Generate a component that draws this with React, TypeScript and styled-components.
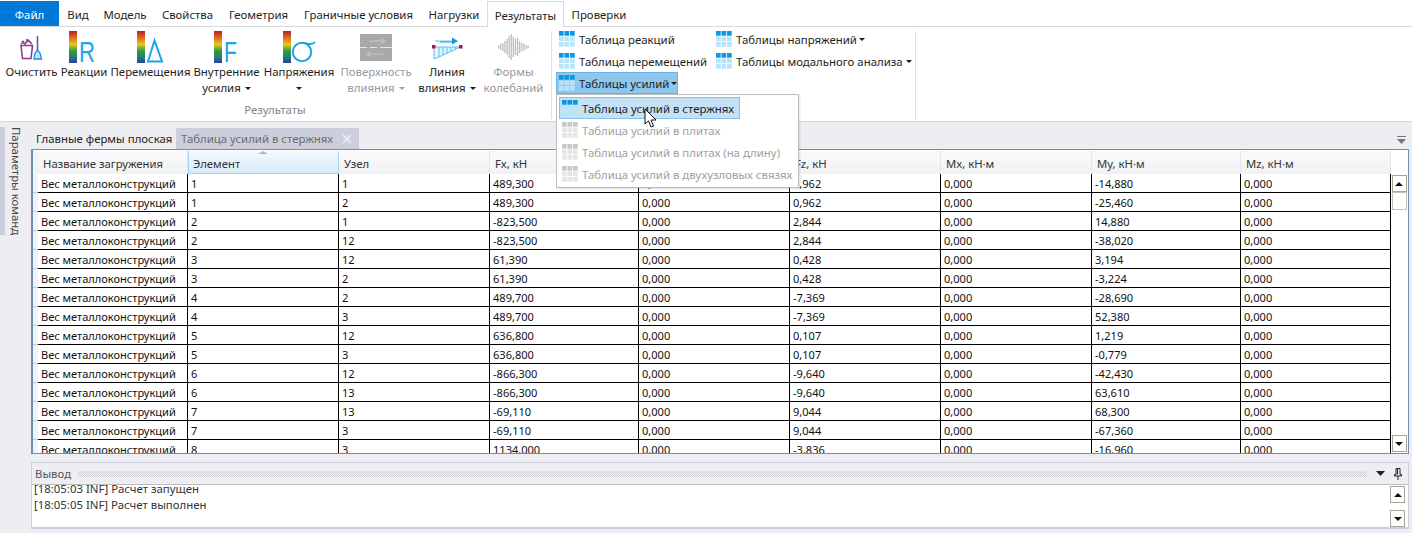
import React from "react";
import styled, { createGlobalStyle } from "styled-components";

const Global = createGlobalStyle`
  html, body { margin: 0; padding: 0; background: #eeeef2; }
  body { font-family: "Noto Sans", "Liberation Sans", sans-serif; font-size: 11.4px; color: #1e1e1e; }
  #root { width: 1412px; height: 533px; overflow: hidden; }
`;

const Page = styled.div`
  width: 1412px; height: 533px; display: flex; flex-direction: column; position: relative; overflow: hidden;
`;
const MenuBar = styled.div`
  height: 25px; padding-top: 1px; background: #fff; display: flex; border-bottom: 1px solid #dadada; box-sizing: content-box; flex: none;
`;
const FileTab = styled.div`
  width: 59px; height: 25px; background: #0078d7; color: #fff; display: flex; align-items: center; justify-content: center; margin-right: 1px; box-sizing: border-box; padding-top: 1px;
`;
const MenuTab = styled.div<{ $active?: boolean; $w: number }>`
  width: ${p => p.$w}px; height: ${p => (p.$active ? 26 : 25)}px; display: flex; align-items: center; justify-content: center; box-sizing: border-box;
  background: #fff; padding-top: ${p => (p.$active ? 1 : 2)}px; position: relative;
  ${p => p.$active ? "border: 1px solid #dadada; border-bottom: none;" : ""}
`;
const Ribbon = styled.div`
  height: 94px; flex: none; background: #fff; display: flex; border-bottom: 1px solid #d8d8dc; padding-left: 4px; box-sizing: content-box;
`;
const ResultsGroup = styled.div`
  display: flex; flex-direction: column; width: 547px; height: 94px; flex: none;
`;
const LargeRow = styled.div`
  display: flex; height: 75px; align-items: flex-start;
`;
const GroupLabel = styled.div`
  width: 542px; text-align: center; color: #858585; line-height: 16px;
`;
const LargeButton = styled.div<{ $w: number; $off?: boolean }>`
  width: ${p => p.$w}px; flex: none; display: flex; flex-direction: column; align-items: center; padding-top: 4px; white-space: nowrap;
  color: ${p => (p.$off ? "#9a9a9a" : "#1e1e1e")}; line-height: 16px;
`;
const IconBox = styled.div`
  height: 32px; margin-bottom: 1px; display: flex; align-items: center; justify-content: center;
`;
const Caret = styled.span<{ $off?: boolean; $shift?: number }>`
  display: inline-block; width: 0; height: 0; margin-left: ${p => p.$shift ?? 4}px; vertical-align: 2px;
  border-left: 3px solid transparent; border-right: 3px solid transparent; border-top: 3px solid ${p => (p.$off ? "#a0a0a0" : "#1e1e1e")};
`;
const Sep = styled.div`
  width: 1px; height: 88px; margin-top: 4px; background: #e0e0e4; flex: none;
`;
const TablesGroup = styled.div`
  display: flex; padding: 1px 0 0 4px; gap: 3px; width: 363px; box-sizing: border-box;
`;
const SmallCol = styled.div`
  display: flex; flex-direction: column;
`;
const SmallButton = styled.div<{ $active?: boolean }>`
  height: 22px; display: flex; align-items: center; gap: 4px; padding: 0 3px; white-space: nowrap; width: max-content; box-sizing: border-box;
  ${p => p.$active ? "background: #8ec6ee; border: 1px solid #6db2e4; padding: 0 0 0 2px;" : ""}
`;
const Main = styled.div`
  flex: 1; display: flex; min-height: 0;
`;
const SideRail = styled.div`
  width: 31px; flex: none; display: flex; padding-top: 5px; align-items: flex-start;
`;
const RailStripe = styled.div`
  width: 5px; height: 108px; background: #cccedb; flex: none;
`;
const RailText = styled.div`
  writing-mode: vertical-rl; color: #444; margin-left: 3px; line-height: 16px; white-space: nowrap;
`;
const Work = styled.div`
  width: 1378px; flex: none; display: flex; flex-direction: column;
`;
const DocTabs = styled.div`
  height: 21px; margin-top: 6px; display: flex; align-items: flex-start; position: relative; flex: none;
`;
const DocTab = styled.div`
  height: 20px; display: flex; align-items: center; padding: 0 5px; white-space: nowrap; width: 145px; box-sizing: border-box;
`;
const DimDocTab = styled.div`
  height: 21px; width: 183px; box-sizing: border-box; display: flex; align-items: center; justify-content: space-between; padding: 0 7px 0 5px; white-space: nowrap;
  background: #cccedb; color: #6d6d70;
`;
const OverflowIcon = styled.div`
  position: absolute; right: 3px; top: 4px; width: 9px;
`;
const TableFrame = styled.div`
  height: 305px; flex: none; border: 1px solid #6f8fb0; background: #fff; display: flex; overflow: hidden; padding: 1px 0 0 1px;
  box-sizing: border-box; box-shadow: inset 1px 0 0 #6f8fb0;
`;
const GridArea = styled.div`
  display: grid; width: 1358px; flex: none; grid-template-columns: 5px 150px 151px 151px 149px 151px 151px 151px 149px 150px; grid-auto-rows: 19px; align-content: start;
  grid-template-rows: 23px; font-size: 11.05px;
`;
const HeadCorner = styled.div`
  background: #f2f3f5;
`;
const HeadCell = styled.div<{ $sel?: boolean }>`
  height: 23px; box-sizing: border-box; display: flex; align-items: center; padding: 2px 0 0 5px; color: #333; white-space: nowrap; position: relative; font-size: 11.3px;
  background: ${p => (p.$sel ? "linear-gradient(#f2f9fe, #d8ecfa)" : "linear-gradient(#fafafb, #f0f1f3)")};
  border-right: 1px solid ${p => (p.$sel ? "#a6d4f2" : "#e6e6ea")};
  ${p => p.$sel ? "box-shadow: inset 1px 0 0 #a6d4f2; border-bottom: 1px solid #a6d4f2;" : ""}
`;
const SortMark = styled.div`
  position: absolute; left: 70px; top: 0; width: 0; height: 0;
  border-left: 5px solid transparent; border-right: 5px solid transparent; border-bottom: 3px solid #a8b8c4;
`;
const RowHead = styled.div`
  background: #f2f3f5; border-bottom: 1px solid #c8c8c8;
`;
const Cell = styled.div`
  height: 19px; box-sizing: border-box; border-right: 1px solid #000; border-bottom: 1px solid #000; padding-left: 3px;
  line-height: 19px; white-space: nowrap; color: #111; overflow: hidden;
`;
const VScroll = styled.div`
  flex: 1; display: flex; flex-direction: column; padding: 24px 1px 1px 0; background: #fff;
`;
const ScrollTrack = styled.div`
  flex: 1; display: flex; flex-direction: column; align-items: center;
`;
const ScrollBtn = styled.div`
  width: 15px; height: 17px; box-sizing: border-box; border: 1px solid #a9a498; background: #fff; display: flex; align-items: center; justify-content: center; flex: none;
`;
const ScrollThumb = styled.div`
  width: 15px; height: 18px; box-sizing: border-box; border: 1px solid #c4c0b6; background: #fff; flex: none;
`;
const Spacer = styled.div`
  flex: 1;
`;
const Tri = styled.span<{ $up?: boolean }>`
  width: 0; height: 0; border-left: 4px solid transparent; border-right: 4px solid transparent;
  ${p => (p.$up ? "border-bottom: 4px solid #111;" : "border-top: 4px solid #111;")}
`;
const Output = styled.div`
  margin-top: 8px; height: 67px; flex: none; box-sizing: border-box; border: 1px solid #cccedb; border-bottom-width: 2px; display: flex; flex-direction: column; background: #fff;
`;
const OutHead = styled.div`
  height: 21px; flex: none; background: #eeeef2; border-bottom: 1px solid #bdbdbd; display: flex; align-items: center; padding: 0 6px 0 3px; gap: 7px; color: #555;
`;
const Dots = styled.div`
  flex: 1; height: 6px; margin-right: 2px;
  background-image: conic-gradient(#d2d2d8 25%, transparent 0 50%, #d2d2d8 0 75%, transparent 0); background-size: 2px 2px;
`;
const OutBody = styled.div`
  flex: 1; display: flex; min-height: 0; overflow: hidden;
`;
const LogText = styled.div`
  flex: 1; padding: 0 0 0 2px; line-height: 16px; color: #333; margin-top: -4px; white-space: pre;
`;
const LogScroll = styled.div`
  width: 17px; flex: none; margin-right: 1px; display: flex; flex-direction: column; padding: 1px 0 0;
`;
const Dropdown = styled.div`
  position: absolute; left: 556px; top: 94px; width: 243px; height: 94px; box-sizing: border-box; background: #fff; border: 1px solid #bdbdbd;
  padding: 2px; display: flex; flex-direction: column; box-shadow: 1px 1px 2px rgba(0,0,0,.12); z-index: 5;
`;
const DropItem = styled.div<{ $hot?: boolean; $off?: boolean }>`
  height: 22px; flex: none; width: ${p => (p.$hot ? "181px" : "auto")}; box-sizing: border-box; display: flex; align-items: center; gap: 4px; padding-left: 3px; white-space: nowrap;
  color: ${p => (p.$off ? "#a0a0a0" : "#1e1e1e")};
  ${p => p.$hot ? "background: #c5e1f6; border: 1px solid #88c2ec; padding-left: 2px;" : ""}
`;
const Cursor = styled.svg`
  position: absolute; left: 644px; top: 108px; z-index: 6;
`;

const TableIcon = ({ off }: { off?: boolean }) => {
  const top = off ? "#c8c8c8" : "#0a97e6";
  const rest = off ? "#e6e6e6" : "#b8e4fa";
  const cells = [];
  for (let r = 0; r < 3; r++)
    for (let c = 0; c < 3; c++)
      cells.push(<rect key={`${r}${c}`} x={c * 5.5} y={r * 5.5} width={4.7} height={4.7} fill={r === 0 ? top : rest} />);
  return <svg width="16" height="16" viewBox="0 0 16 16" style={{ flex: "none" }}>{cells}</svg>;
};

const Spectrum = ({ id }: { id: string }) => (
  <>
    <defs>
      <linearGradient id={id} x1="0" y1="0" x2="0" y2="1">
        <stop offset="0" stopColor="#b3202a" />
        <stop offset=".25" stopColor="#e67a1e" />
        <stop offset=".42" stopColor="#e6c81e" />
        <stop offset=".62" stopColor="#2f9e3a" />
        <stop offset=".82" stopColor="#1f7f7a" />
        <stop offset="1" stopColor="#2b3f8f" />
      </linearGradient>
    </defs>
    <rect x="0" y="0" width="8" height="32" fill={`url(#${id})`} />
  </>
);

const LetterSvg = styled.svg<{ $nudge: number }>`
  margin-left: ${p => p.$nudge}px;
`;
const LetterIcon = ({ id, letter, w, nudge }: { id: string; letter: string; w: number; nudge: number }) => (
  <LetterSvg $nudge={nudge} width="30" height="32" viewBox="0 0 30 32">
    <Spectrum id={id} />
    <text x="10" y="31" fontFamily="Liberation Sans, sans-serif" fontSize="29" fill="#1ea4e8" textLength={w} lengthAdjust="spacingAndGlyphs">{letter}</text>
  </LetterSvg>
);
const DeltaIcon = () => (
  <svg width="27" height="32" viewBox="0 0 27 32">
    <Spectrum id="gd" />
    <path d="M17.5 9.5 L11 30.5 H25 Z" fill="none" stroke="#1ea4e8" strokeWidth="2" />
  </svg>
);
const SigmaIcon = () => (
  <svg width="33" height="32" viewBox="0 0 33 32">
    <Spectrum id="gs" />
    <circle cx="19" cy="21" r="9.2" fill="none" stroke="#1ea4e8" strokeWidth="2" />
    <path d="M20 11.8 C24 12.5 29 15 32 11" fill="none" stroke="#1ea4e8" strokeWidth="2" />
  </svg>
);
const BroomIcon = () => (
  <svg width="24" height="32" viewBox="0 0 24 32" style={{ marginLeft: 1 }}>
    <path d="M1 14.5 H12.5 L11 27.5 H2.5 Z" fill="none" stroke="#8e3b8c" strokeWidth="1.6" />
    <path d="M2 10 L5 13 L8 9 L12 13 M6 8.5 L9.5 11 M1 13 L4 10" fill="none" stroke="#8e3b8c" strokeWidth="1.5" />
    <path d="M17.5 5 V19" stroke="#6a55a8" strokeWidth="1.6" />
    <path d="M14 28 L15 22 L17.5 19 L20 22 L21.5 28 Z" fill="#bfe4fa" stroke="#1f8fdc" strokeWidth="1.3" />
  </svg>
);
const SurfaceIcon = () => (
  <svg width="32" height="28" viewBox="0 0 32 28" style={{ marginTop: 2 }}>
    <rect width="32" height="27" fill="#a9a9a9" />
    <path d="M0 13.5 H7 M10 13.5 H17 M20 13.5 H32" stroke="#e8e8e8" strokeWidth="1.2" />
    <path d="M9 7 H25 M21 4.5 L25 7 L21 9.5 M23 20 H7 M11 17.5 L7 20 L11 22.5" fill="none" stroke="#c9c9c9" strokeWidth="1" />
  </svg>
);
const LineIcon = () => (
  <svg width="32" height="24" viewBox="0 0 32 24" style={{ marginTop: 2 }}>
    <path d="M3 11 H29 L8 21 L3 23 Z" fill="#e4f5fd" stroke="#5cc0ee" strokeWidth="1" />
    <path d="M8 11 V21 M12 11 V19 M16 11 V17.5 M20 11 V15.5 M24 11 V13.5" stroke="#5cc0ee" strokeWidth="1" />
    <rect x="1" y="9" width="3.5" height="3.5" fill="#a0195c" />
    <rect x="28" y="9" width="3.5" height="3.5" fill="#a0195c" />
    <path d="M4 5 H23" stroke="#5cc0ee" strokeWidth="1" />
    <path d="M9 6 H23" stroke="#1197e0" strokeWidth="1" />
    <path d="M21 1.5 L27 5 L21 8.5 Z" fill="#1197e0" />
  </svg>
);
const WaveIcon = () => {
  const hs = [3, 6, 8, 12, 16, 22, 26, 20, 16, 18, 12, 9, 7, 4, 3];
  return (
    <svg width="32" height="28" viewBox="0 0 32 28">
      {hs.map((h, i) => <rect key={i} x={i * 2.1} y={14 - h / 2} width="1.3" height={h} fill="#bdbdbd" />)}
    </svg>
  );
};

const names = ["Название загружения", "Элемент", "Узел", "Fx, кН", "Fy, кН", "Fz, кН", "Mx, кН·м", "My, кН·м", "Mz, кН·м"];
const data = [
  ["1", "1", "489,300", "0,962", "-14,880"],
  ["1", "2", "489,300", "0,962", "-25,460"],
  ["2", "1", "-823,500", "2,844", "14,880"],
  ["2", "12", "-823,500", "2,844", "-38,020"],
  ["3", "12", "61,390", "0,428", "3,194"],
  ["3", "2", "61,390", "0,428", "-3,224"],
  ["4", "2", "489,700", "-7,369", "-28,690"],
  ["4", "3", "489,700", "-7,369", "52,380"],
  ["5", "12", "636,800", "0,107", "1,219"],
  ["5", "3", "636,800", "0,107", "-0,779"],
  ["6", "12", "-866,300", "-9,640", "-42,430"],
  ["6", "13", "-866,300", "-9,640", "63,610"],
  ["7", "13", "-69,110", "9,044", "68,300"],
  ["7", "3", "-69,110", "9,044", "-67,360"],
  ["8", "3", "1134,000", "-3,836", "-16,960"],
];
const tabs: [string, number, boolean?][] = [
  ["Вид", 36], ["Модель", 58], ["Свойства", 67], ["Геометрия", 75], ["Граничные условия", 125], ["Нагрузки", 66], ["Результаты", 77, true], ["Проверки", 70],
];

export default function App() {
  return (
    <Page>
      <Global />
      <MenuBar>
        <FileTab>Файл</FileTab>
        {tabs.map(([t, w, a]) => <MenuTab key={t} $w={w} $active={a}>{t}</MenuTab>)}
      </MenuBar>
      <Ribbon>
        <ResultsGroup>
          <LargeRow>
            <LargeButton $w={55}><IconBox><BroomIcon /></IconBox>Очистить</LargeButton>
            <LargeButton $w={50}><IconBox><LetterIcon id="gr" letter="R" w={16} nudge={0} /></IconBox>Реакции</LargeButton>
            <LargeButton $w={83}><IconBox><DeltaIcon /></IconBox>Перемещения</LargeButton>
            <LargeButton $w={69}><IconBox><LetterIcon id="gf" letter="F" w={13} nudge={4} /></IconBox>Внутренние<span>усилия<Caret /></span></LargeButton>
            <LargeButton $w={76}><IconBox><SigmaIcon /></IconBox>Напряжения<span><Caret $shift={0} /></span></LargeButton>
            <LargeButton $w={78} $off><IconBox><SurfaceIcon /></IconBox>Поверхность<span>влияния<Caret $off /></span></LargeButton>
            <LargeButton $w={64}><IconBox><LineIcon /></IconBox>Линия<span>влияния<Caret /></span></LargeButton>
            <LargeButton $w={69} $off><IconBox><WaveIcon /></IconBox>Формы<span>колебаний</span></LargeButton>
          </LargeRow>
          <GroupLabel>Результаты</GroupLabel>
        </ResultsGroup>
        <Sep />
        <TablesGroup>
          <SmallCol>
            <SmallButton><TableIcon />Таблица реакций</SmallButton>
            <SmallButton><TableIcon />Таблица перемещений</SmallButton>
            <SmallButton $active><TableIcon />Таблицы усилий<Caret $shift={-2} /></SmallButton>
          </SmallCol>
          <SmallCol>
            <SmallButton><TableIcon />Таблицы напряжений<Caret $shift={-2} /></SmallButton>
            <SmallButton><TableIcon />Таблицы модального анализа<Caret $shift={-1} /></SmallButton>
          </SmallCol>
        </TablesGroup>
        <Sep />
      </Ribbon>
      <Main>
        <SideRail>
          <RailStripe />
          <RailText>Параметры команд</RailText>
        </SideRail>
        <Work>
          <DocTabs>
            <DocTab>Главные фермы плоская</DocTab>
            <DimDocTab>Таблица усилий в стержнях
              <svg width="10" height="10" viewBox="0 0 10 10"><path d="M1 1 L9 9 M9 1 L1 9" stroke="#f0f0f4" strokeWidth="1.5" /></svg>
            </DimDocTab>
            <OverflowIcon>
              <svg width="9" height="8" viewBox="0 0 9 8"><path d="M0 0.5 H9" stroke="#777" /><path d="M0 3 H9 L4.5 8 Z" fill="#777" /></svg>
            </OverflowIcon>
          </DocTabs>
          <TableFrame>
            <GridArea>
              <HeadCorner />
              {names.map((n, i) => (
                <HeadCell key={n} $sel={i === 1}>{n}{i === 1 && <SortMark />}</HeadCell>
              ))}
              {data.map((r, i) => (
                <React.Fragment key={i}>
                  <RowHead />
                  <Cell>Вес металлоконструкций</Cell>
                  <Cell>{r[0]}</Cell>
                  <Cell>{r[1]}</Cell>
                  <Cell>{r[2]}</Cell>
                  <Cell>0,000</Cell>
                  <Cell>{r[3]}</Cell>
                  <Cell>0,000</Cell>
                  <Cell>{r[4]}</Cell>
                  <Cell>0,000</Cell>
                </React.Fragment>
              ))}
            </GridArea>
            <VScroll>
              <ScrollTrack>
                <ScrollBtn><Tri $up /></ScrollBtn>
                <ScrollThumb />
                <Spacer />
                <ScrollBtn><Tri /></ScrollBtn>
              </ScrollTrack>
            </VScroll>
          </TableFrame>
          <Output>
            <OutHead>
              Вывод
              <Dots />
              <svg width="9" height="5" viewBox="0 0 9 5"><path d="M0 0 H9 L4.5 5 Z" fill="#222" /></svg>
              <svg width="8" height="12" viewBox="0 0 8 12" style={{ marginLeft: 2 }}><path d="M2 0.5 H6 V6.5 H7.5 V8 H0.5 V6.5 H2 Z M3.5 1 V6.5 M4 8 V12" fill="none" stroke="#222" /></svg>
            </OutHead>
            <OutBody>
              <LogText>{"[18:05:03 INF] Расчет запущен\n[18:05:05 INF] Расчет выполнен"}</LogText>
              <LogScroll>
                <ScrollBtn><Tri $up /></ScrollBtn>
                <Spacer />
                <ScrollBtn><Tri /></ScrollBtn>
              </LogScroll>
            </OutBody>
          </Output>
        </Work>
      </Main>
      <Dropdown>
        <DropItem $hot><TableIcon />Таблица усилий в стержнях</DropItem>
        <DropItem $off><TableIcon off />Таблица усилий в плитах</DropItem>
        <DropItem $off><TableIcon off />Таблица усилий в плитах (на длину)</DropItem>
        <DropItem $off><TableIcon off />Таблица усилий в двухузловых связях</DropItem>
      </Dropdown>
      <Cursor width="13" height="21" viewBox="0 0 13 21">
        <path d="M1 1 V16 L4.5 12.8 L7 19 L9.5 18 L7 12 H12 Z" fill="#fff" stroke="#111" strokeWidth="1" />
      </Cursor>
    </Page>
  );
}
